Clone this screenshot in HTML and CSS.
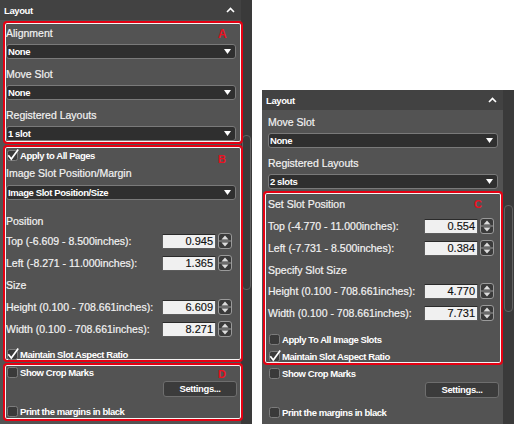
FILE: index.html
```html
<!DOCTYPE html>
<html>
<head>
<meta charset="utf-8">
<link rel="stylesheet" href="styles.css">
</head>
<body>
<div class="stage">
  <section class="panel panel-left">
    <div class="pane">
      <div class="hdr"><span>Layout</span><svg class="chev" width="9" height="6" viewBox="0 0 9 6"><path d="M1 5 L4.5 1.5 L8 5" fill="none" stroke="#fff" stroke-width="1.6"/></svg></div>

      <div class="box box-a">
        <span class="tag tag-a">A</span>
        <div class="lbl mt3">Alignment</div>
        <div class="select mt4"><span>None</span><svg width="7" height="5" viewBox="0 0 7 5"><path d="M0 0 H7 L3.5 5Z" fill="#fff"/></svg></div>
        <div class="lbl mt8">Move Slot</div>
        <div class="select mt4"><span>None</span><svg width="7" height="5" viewBox="0 0 7 5"><path d="M0 0 H7 L3.5 5Z" fill="#fff"/></svg></div>
        <div class="lbl mt8">Registered Layouts</div>
        <div class="select mt4"><span>1 slot</span><svg width="7" height="5" viewBox="0 0 7 5"><path d="M0 0 H7 L3.5 5Z" fill="#fff"/></svg></div>
      </div>

      <div class="box box-b">
        <span class="tag tag-b">B</span>
        <div class="chk mt3"><svg class="cb" width="11" height="11" viewBox="0 0 11 11"><rect x=".5" y=".5" width="10" height="10" rx="2" fill="#3a3a3a" stroke="#7c7c7c"/><path d="M1.3 5.2 L4.3 9 L11.2 -0.6" fill="none" stroke="#fff" stroke-width="1.7"/></svg><span>Apply to All Pages</span></div>
        <div class="lbl mt5">Image Slot Position/Margin</div>
        <div class="select mt5"><span>Image Slot Position/Size</span><svg width="7" height="5" viewBox="0 0 7 5"><path d="M0 0 H7 L3.5 5Z" fill="#fff"/></svg></div>
        <div class="lbl mt14">Position</div>
        <div class="row mt5"><span class="rl">Top (-6.609 - 8.500inches):</span><span class="num">0.945</span><svg class="spin" width="14" height="16" viewBox="0 0 14 16"><rect x=".5" y=".5" width="13" height="15" rx="2.5" fill="#3a3a3a" stroke="#9a9a9a"/><line x1="1" y1="8" x2="13" y2="8" stroke="#9a9a9a"/><path d="M3.5 6.5 L7 2.5 L10.5 6.5Z" fill="#dcdcdc"/><path d="M3.5 9.5 L7 13.5 L10.5 9.5Z" fill="#dcdcdc"/></svg></div>
        <div class="row mt6"><span class="rl">Left (-8.271 - 11.000inches):</span><span class="num">1.365</span><svg class="spin" width="14" height="16" viewBox="0 0 14 16"><rect x=".5" y=".5" width="13" height="15" rx="2.5" fill="#3a3a3a" stroke="#9a9a9a"/><line x1="1" y1="8" x2="13" y2="8" stroke="#9a9a9a"/><path d="M3.5 6.5 L7 2.5 L10.5 6.5Z" fill="#dcdcdc"/><path d="M3.5 9.5 L7 13.5 L10.5 9.5Z" fill="#dcdcdc"/></svg></div>
        <div class="lbl mt7">Size</div>
        <div class="row mt7"><span class="rl">Height (0.100 - 708.661inches):</span><span class="num">6.609</span><svg class="spin" width="14" height="16" viewBox="0 0 14 16"><rect x=".5" y=".5" width="13" height="15" rx="2.5" fill="#3a3a3a" stroke="#9a9a9a"/><line x1="1" y1="8" x2="13" y2="8" stroke="#9a9a9a"/><path d="M3.5 6.5 L7 2.5 L10.5 6.5Z" fill="#dcdcdc"/><path d="M3.5 9.5 L7 13.5 L10.5 9.5Z" fill="#dcdcdc"/></svg></div>
        <div class="row mt6"><span class="rl">Width (0.100 - 708.661inches):</span><span class="num">8.271</span><svg class="spin" width="14" height="16" viewBox="0 0 14 16"><rect x=".5" y=".5" width="13" height="15" rx="2.5" fill="#3a3a3a" stroke="#9a9a9a"/><line x1="1" y1="8" x2="13" y2="8" stroke="#9a9a9a"/><path d="M3.5 6.5 L7 2.5 L10.5 6.5Z" fill="#dcdcdc"/><path d="M3.5 9.5 L7 13.5 L10.5 9.5Z" fill="#dcdcdc"/></svg></div>
        <div class="chk mt12"><svg class="cb" width="11" height="11" viewBox="0 0 11 11"><rect x=".5" y=".5" width="10" height="10" rx="2" fill="#3a3a3a" stroke="#7c7c7c"/><path d="M1.3 5.2 L4.3 9 L11.2 -0.6" fill="none" stroke="#fff" stroke-width="1.7"/></svg><span>Maintain Slot Aspect Ratio</span></div>
      </div>

      <div class="box box-d">
        <span class="tag tag-d">D</span>
        <div class="chk mt2"><svg class="cb" width="11" height="11" viewBox="0 0 11 11"><rect x=".5" y=".5" width="10" height="10" rx="2" fill="#3a3a3a" stroke="#7c7c7c"/></svg><span>Show Crop Marks</span></div>
        <div class="btnrow mt3"><span class="btn">Settings...</span></div>
        <div class="chk mt9"><svg class="cb" width="11" height="11" viewBox="0 0 11 11"><rect x=".5" y=".5" width="10" height="10" rx="2" fill="#3a3a3a" stroke="#7c7c7c"/></svg><span>Print the margins in black</span></div>
      </div>
    </div>
    <div class="track"><div class="thumb"></div></div>
  </section>

  <section class="panel panel-right">
    <div class="pane">
      <div class="hdr"><span>Layout</span><svg class="chev" width="9" height="6" viewBox="0 0 9 6"><path d="M1 5 L4.5 1.5 L8 5" fill="none" stroke="#fff" stroke-width="1.6"/></svg></div>

      <div class="group">
        <div class="lbl mt5">Move Slot</div>
        <div class="select mt4"><span>None</span><svg width="7" height="5" viewBox="0 0 7 5"><path d="M0 0 H7 L3.5 5Z" fill="#fff"/></svg></div>
        <div class="lbl mt8">Registered Layouts</div>
        <div class="select mt4"><span>2 slots</span><svg width="7" height="5" viewBox="0 0 7 5"><path d="M0 0 H7 L3.5 5Z" fill="#fff"/></svg></div>
      </div>

      <div class="box box-c">
        <span class="tag tag-c">C</span>
        <div class="lbl mt4">Set Slot Position</div>
        <div class="row mt7"><span class="rl">Top (-4.770 - 11.000inches):</span><span class="num">0.554</span><svg class="spin" width="14" height="16" viewBox="0 0 14 16"><rect x=".5" y=".5" width="13" height="15" rx="2.5" fill="#3a3a3a" stroke="#9a9a9a"/><line x1="1" y1="8" x2="13" y2="8" stroke="#9a9a9a"/><path d="M3.5 6.5 L7 2.5 L10.5 6.5Z" fill="#dcdcdc"/><path d="M3.5 9.5 L7 13.5 L10.5 9.5Z" fill="#dcdcdc"/></svg></div>
        <div class="row mt6"><span class="rl">Left (-7.731 - 8.500inches):</span><span class="num">0.384</span><svg class="spin" width="14" height="16" viewBox="0 0 14 16"><rect x=".5" y=".5" width="13" height="15" rx="2.5" fill="#3a3a3a" stroke="#9a9a9a"/><line x1="1" y1="8" x2="13" y2="8" stroke="#9a9a9a"/><path d="M3.5 6.5 L7 2.5 L10.5 6.5Z" fill="#dcdcdc"/><path d="M3.5 9.5 L7 13.5 L10.5 9.5Z" fill="#dcdcdc"/></svg></div>
        <div class="lbl mt7">Specify Slot Size</div>
        <div class="row mt6"><span class="rl">Height (0.100 - 708.661inches):</span><span class="num">4.770</span><svg class="spin" width="14" height="16" viewBox="0 0 14 16"><rect x=".5" y=".5" width="13" height="15" rx="2.5" fill="#3a3a3a" stroke="#9a9a9a"/><line x1="1" y1="8" x2="13" y2="8" stroke="#9a9a9a"/><path d="M3.5 6.5 L7 2.5 L10.5 6.5Z" fill="#dcdcdc"/><path d="M3.5 9.5 L7 13.5 L10.5 9.5Z" fill="#dcdcdc"/></svg></div>
        <div class="row mt6"><span class="rl">Width (0.100 - 708.661inches):</span><span class="num">7.731</span><svg class="spin" width="14" height="16" viewBox="0 0 14 16"><rect x=".5" y=".5" width="13" height="15" rx="2.5" fill="#3a3a3a" stroke="#9a9a9a"/><line x1="1" y1="8" x2="13" y2="8" stroke="#9a9a9a"/><path d="M3.5 6.5 L7 2.5 L10.5 6.5Z" fill="#dcdcdc"/><path d="M3.5 9.5 L7 13.5 L10.5 9.5Z" fill="#dcdcdc"/></svg></div>
        <div class="chk mt13"><svg class="cb" width="11" height="11" viewBox="0 0 11 11"><rect x=".5" y=".5" width="10" height="10" rx="2" fill="#3a3a3a" stroke="#7c7c7c"/></svg><span>Apply To All Image Slots</span></div>
        <div class="chk mt6"><svg class="cb" width="11" height="11" viewBox="0 0 11 11"><rect x=".5" y=".5" width="10" height="10" rx="2" fill="#3a3a3a" stroke="#7c7c7c"/><path d="M1.3 5.2 L4.3 9 L11.2 -0.6" fill="none" stroke="#fff" stroke-width="1.7"/></svg><span>Maintain Slot Aspect Ratio</span></div>
      </div>

      <div class="group">
        <div class="chk mt3"><svg class="cb" width="11" height="11" viewBox="0 0 11 11"><rect x=".5" y=".5" width="10" height="10" rx="2" fill="#3a3a3a" stroke="#7c7c7c"/></svg><span>Show Crop Marks</span></div>
        <div class="btnrow mt3"><span class="btn">Settings...</span></div>
        <div class="chk mt9"><svg class="cb" width="11" height="11" viewBox="0 0 11 11"><rect x=".5" y=".5" width="10" height="10" rx="2" fill="#3a3a3a" stroke="#7c7c7c"/></svg><span>Print the margins in black</span></div>
      </div>
    </div>
    <div class="track"><div class="thumb"></div></div>
  </section>
</div>
</body>
</html>
```

FILE: styles.css
```css
* { box-sizing: border-box; }
html, body { margin: 0; padding: 0; background: #fff; }
body { font-family: "Liberation Sans", Arial, sans-serif; }

.stage { display: flex; align-items: flex-start; width: 514px; height: 424px; overflow: hidden; }

.panel { display: flex; width: 252px; background: #535353; }
.panel-left { height: 424px; }
.panel-right { height: 334px; margin-left: 10px; margin-top: 90px; }

.pane { width: 241px; display: flex; flex-direction: column; }

.hdr {
  height: 20px; flex: none;
  background: #424242;
  display: flex; align-items: center; justify-content: space-between;
  padding: 0 6px 0 4px;
  color: #fff; font-size: 9.5px; font-weight: bold; letter-spacing: -0.4px;
}
.chev { display: block; margin-top: -1px; }

.track { width: 11px; background: #3a3a3a; }
.thumb { width: 9px; margin-left: 1px; border: 1px solid #626262; border-radius: 4px; }
.panel-left .thumb { margin-top: 135px; height: 155px; }
.panel-right .thumb { margin-top: 115px; height: 107px; }

.group { display: flex; flex-direction: column; padding-left: 6px; }

.box {
  position: relative; flex: none;
  width: 240px;
  border: 2px solid #e50012;
  border-radius: 4px;
  box-shadow: inset 0 0 0 1px #f4f4f4;
  display: flex; flex-direction: column;
}
.box-a { margin: 1px 0 0 3px; padding-left: 1px; height: 123px; }
.box-b { margin: 1px 0 0 3px; padding-left: 1px; height: 217px; }
.box-d { margin: 1px 0 0 3px; padding-left: 1px; height: 58px; }
.box-c { margin: 2px 0 0 1px; padding-left: 3px; height: 174px; }

.tag { position: absolute; color: #ec1020; font-size: 12px; line-height: 12px; font-weight: bold; }
.tag-a { left: 213px; top: 5px; }
.tag-b { left: 213px; top: 6px; font-size: 11px; }
.tag-d { left: 213px; top: 3px; font-size: 11px; }
.tag-c { left: 209px; top: 5px; font-size: 11px; }

.lbl {
  height: 14px; line-height: 14px; font-size: 10.5px; color: #f2f2f2; white-space: nowrap;
  -webkit-text-stroke: 0.2px #f2f2f2;
}

.select {
  width: 230px; height: 15px; flex: none;
  border: 1px solid #7a7a7a; border-radius: 3px;
  background: #2f2f2f;
  display: flex; align-items: center; justify-content: space-between;
  padding: 0 4px 0 1px;
  color: #fff; font-size: 9.5px; font-weight: bold; letter-spacing: -0.4px; line-height: 13px;
}
.select svg { display: block; }

.row { width: 226px; height: 16px; flex: none; display: flex; align-items: center; }
.rl {
  flex: 1; font-size: 10.5px; color: #f2f2f2; white-space: nowrap; line-height: 14px;
  -webkit-text-stroke: 0.2px #f2f2f2;
}
.num {
  width: 54px; height: 15px;
  background: #f0f0f0;
  border: 1px solid #5c5c5c; border-top-color: #2a2a2a;
  color: #111; font-size: 11px; line-height: 13px;
  text-align: right; padding-right: 2px;
  -webkit-text-stroke: 0.15px #111;
}
.spin { display: block; margin-left: 2px; }

.chk {
  height: 11px; flex: none;
  display: flex; align-items: center;
  padding-left: 1px;
  color: #fff; font-size: 9.5px; font-weight: bold; letter-spacing: -0.45px; white-space: nowrap;
}
.cb { display: block; overflow: visible; margin-right: 2px; flex: none; }

.btnrow { width: 231px; height: 16px; flex: none; display: flex; justify-content: flex-end; }
.btn {
  width: 74px; height: 16px;
  border: 1px solid #6e6e6e; border-radius: 3px;
  background: #3b3b3b;
  color: #fff; font-size: 9.5px; font-weight: bold; letter-spacing: -0.4px;
  line-height: 14px; text-align: center;
}

.mt2 { margin-top: 2px; }
.mt3 { margin-top: 3px; }
.mt4 { margin-top: 4px; }
.mt5 { margin-top: 5px; }
.mt6 { margin-top: 6px; }
.mt7 { margin-top: 7px; }
.mt8 { margin-top: 8px; }
.mt9 { margin-top: 9px; }
.mt12 { margin-top: 12px; }
.mt13 { margin-top: 13px; }
.mt14 { margin-top: 14px; }
```
